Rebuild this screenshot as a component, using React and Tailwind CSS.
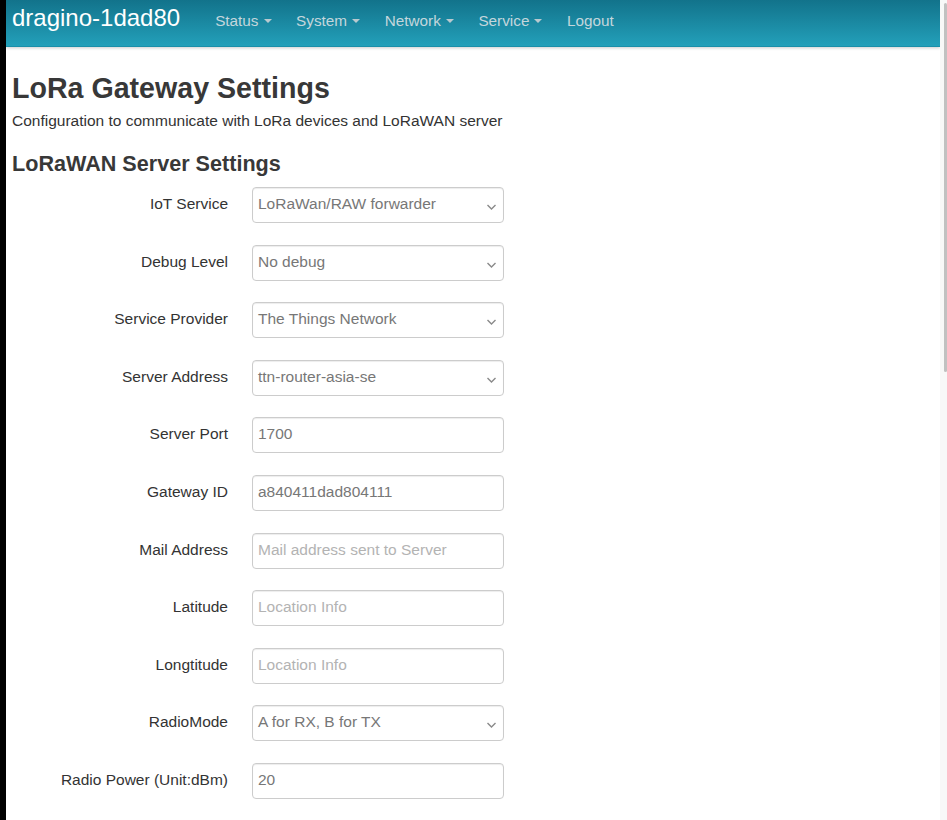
import React from 'react';

const navItems = ['Status', 'System', 'Network', 'Service'];

const fields = [
  { label: 'IoT Service', value: 'LoRaWan/RAW forwarder', select: true },
  { label: 'Debug Level', value: 'No debug', select: true },
  { label: 'Service Provider', value: 'The Things Network', select: true },
  { label: 'Server Address', value: 'ttn-router-asia-se', select: true },
  { label: 'Server Port', value: '1700' },
  { label: 'Gateway ID', value: 'a840411dad804111' },
  { label: 'Mail Address', placeholder: 'Mail address sent to Server' },
  { label: 'Latitude', placeholder: 'Location Info' },
  { label: 'Longtitude', placeholder: 'Location Info' },
  { label: 'RadioMode', value: 'A for RX, B for TX', select: true },
  { label: 'Radio Power (Unit:dBm)', value: '20' },
];

const Caret = () => (
  <span className="inline-block ml-[5px] align-middle w-0 h-0 border-t-[4px] border-t-[#b9c9cf] border-x-[4px] border-x-transparent" />
);

const Chevron = () => (
  <svg className="absolute right-[6px] top-[15px]" width="11" height="8" viewBox="0 0 11 8">
    <path d="M1.5 2 L5.5 6 L9.5 2" fill="none" stroke="#8a8a8a" strokeWidth="1.4" />
  </svg>
);

const Field = ({ f }) => (
  <div className="flex items-center h-[36px]">
    <label className="w-[216px] text-right text-[15.5px] leading-[20px] pb-[2px] text-[#333]">{f.label}</label>
    <div className="relative ml-[24px] w-[252px] h-[36px] border border-[#ccc] rounded-[4px] bg-white shadow-[inset_0_1px_1px_rgba(0,0,0,0.075)] flex items-center px-[5px] pb-[2px] text-[15.5px] leading-[20px]">
      {f.value ? (
        <span className="text-[#777]">{f.value}</span>
      ) : (
        <span className="text-[#b3b3b3]">{f.placeholder}</span>
      )}
      {f.select && <Chevron />}
    </div>
  </div>
);

export default function App() {
  return (
    <div className="flex h-[820px] overflow-hidden bg-white font-['Liberation_Sans',Arial,sans-serif]">
      <div className="w-[6px] bg-black shrink-0" />
      <div className="flex-1 flex flex-col">
        {/* Navbar */}
        <div className="h-[47px] shrink-0 flex items-start bg-gradient-to-b from-[#12738b] to-[#23a0ba] border-b border-[#1b8fa9] shadow-[0_1px_3px_rgba(0,0,0,0.2)]">
          <span className="ml-[6px] mt-[4px] text-[24px] leading-[28px] text-white">dragino-1dad80</span>
          <div className="flex ml-[35px] mt-[11px] gap-[24.6px] text-[15.3px] leading-[20px] text-[#c4d6dc]">
            {navItems.map((n) => (
              <span key={n} className="flex items-center">
                {n}
                <Caret />
              </span>
            ))}
            <span>Logout</span>
          </div>
        </div>

        {/* Content */}
        <div className="pl-[6px] pt-[26px]">
          <h1 className="text-[28.6px] leading-[30px] font-bold text-[#383838]">LoRa Gateway Settings</h1>
          <p className="mt-[8px] text-[15.5px] leading-[20px] text-[#333]">
            Configuration to communicate with LoRa devices and LoRaWAN server
          </p>
          <h2 className="mt-[20px] text-[21.6px] leading-[26px] font-bold text-[#383838]">LoRaWAN Server Settings</h2>
          <div className="mt-[10px] flex flex-col gap-[21.6px]">
            {fields.map((f) => (
              <Field key={f.label} f={f} />
            ))}
          </div>
        </div>
      </div>
      {/* Scrollbar */}
      <div className="w-[7px] shrink-0 bg-[#f8f8f8] pt-[3px] flex justify-end">
        <div className="w-[3px] h-[369px] bg-[#c1c1c1] rounded-[2px]" />
      </div>
    </div>
  );
}
